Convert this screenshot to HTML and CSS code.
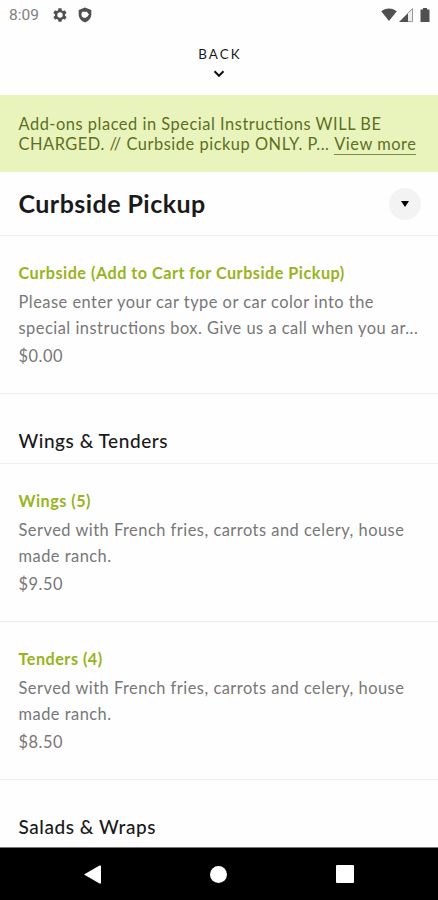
FILE: index.html
```
<!DOCTYPE html>
<html lang="en">
<head>
    <meta charset="UTF-8">
    <meta name="viewport" content="width=device-width, initial-scale=1.0">
    <title>Curbside Pickup</title>
    <link rel="stylesheet" href="styles.css">
</head>
<body>
    <div class="status-bar">
        <span class="time">8:09</span>
        <svg class="gear" width="16" height="16" viewBox="0 0 24 24">
            <path fill-rule="evenodd" d="M19.4 13a7.500 7.500 0 0 0 0-2l2.100-1.600a.5.5 0 0 0 .1-.7l-2-3.400a.5.5 0 0 0-.6-.2l-2.500 1a7.300 7.300 0 0 0-1.700-1l-.4-2.600a.5.5 0 0 0-.5-.5h-4a.5.5 0 0 0-.5.500L9 5.100a7.700 7.700 0 0 0-1.700 1l-2.500-1a.5.5 0 0 0-.6.200l-2 3.400a.5.5 0 0 0 .1.700L4.500 11a8 8 0 0 0 0 2l-2.100 1.600a.5.5 0 0 0-.1.700l2 3.400c.1.200.4.300.6.200l2.500-1c.5.400 1.100.8 1.700 1l.4 2.600c0 .3.200.5.500.5h4c.3 0 .5-.2.500-.5l.4-2.600c.6-.2 1.200-.6 1.700-1l2.500 1c.2.100.5 0 .6-.2l2-3.400a.5.5 0 0 0-.1-.7zM12 16a4 4 0 1 1 0-8 4 4 0 0 1 0 8z"/>
        </svg>
        <svg class="shield" width="14" height="16" viewBox="0 0 14 16">
            <path fill-rule="evenodd" d="M7 .5 13.300 2.900V7.600C13.300 11.200 10.700 14.300 7 15.500 3.300 14.300.7 11.200.7 7.600V2.900zM5 4.500C3.300 5.200 3 8 4 9.600 5 11.200 7.500 11.200 9 9.900L11 7.600 8.600 4.600 7.500 5z"/>
        </svg>
        <div class="signals">
            <svg width="16" height="13" viewBox="0 0 16 13">
                <path d="M8 13 .2 3.300C4.500-.6 11.500-.6 15.800 3.300z"/>
            </svg>
            <svg width="14" height="14" viewBox="0 0 14 14">
                <path d="M0 14 9 5V14z"/>
                <path class="faint" d="M9 5 13.500.5V13.500H9"/>
            </svg>
            <svg class="battery" width="10" height="14" viewBox="0 0 10 14">
                <path d="M3 0H7V1.500H9.500V14H.5V1.500H3z"/>
            </svg>
        </div>
    </div>

    <div class="back">
        <span>BACK</span>
        <svg width="12" height="8" viewBox="0 0 12 8">
            <path d="M1.500 1.300 6 5.800 10.500 1.300"/>
        </svg>
    </div>

    <div class="notice">
        Add-ons placed in Special Instructions WILL BE<br>
        CHARGED. // Curbside pickup ONLY. P... <a class="view-more">View more</a>
    </div>

    <div class="menu-title">
        <h1>Curbside Pickup</h1>
        <div class="dropdown">
            <svg width="8" height="6" viewBox="0 0 8 6">
                <path d="M0 0H8L4 6z"/>
            </svg>
        </div>
    </div>

    <div class="item">
        <h3>Curbside (Add to Cart for Curbside Pickup)</h3>
        <p>Please enter your car type or car color into the<br>special instructions box. Give us a call when you ar...</p>
        <div class="price">$0.00</div>
    </div>

    <h2>Wings &amp; Tenders</h2>

    <div class="item">
        <h3>Wings (5)</h3>
        <p>Served with French fries, carrots and celery, house<br>made ranch.</p>
        <div class="price">$9.50</div>
    </div>

    <div class="item">
        <h3>Tenders (4)</h3>
        <p>Served with French fries, carrots and celery, house<br>made ranch.</p>
        <div class="price">$8.50</div>
    </div>

    <h2>Salads &amp; Wraps</h2>

    <div class="nav-bar">
        <svg width="17" height="19" viewBox="0 0 17 19">
            <path d="M0 9.500 15.500.5Q17 0 17 1.500V17.500Q17 19 15.500 18.500z"/>
        </svg>
        <div class="home"></div>
        <div class="recent"></div>
    </div>
</body>
</html>
```
FILE: styles.css
```
* {
    box-sizing: border-box;
}

body {
    font-family: Lato, sans-serif;
    font-feature-settings: "liga" 1;
    background-color: #fefefe;
    color: #1a1a1a;
    margin: 0;
    height: 900px;
    display: flex;
    flex-direction: column;
    overflow: hidden;
    white-space: nowrap;
}

body > * {
    flex-shrink: 0;
}

h1, h2, h3, p {
    margin: 0;
}

svg {
    display: block;
}

.status-bar {
    display: flex;
    align-items: center;
    height: 29px;
    padding: 0 8px 0 9px;
    fill: #505050;
}

.time {
    width: 43px;
    font-family: Roboto, sans-serif;
    font-size: 15.500px;
    color: #808080;
}

.shield {
    margin-left: 10px;
}

.signals {
    display: flex;
    align-items: center;
    margin-left: auto;
}

.signals svg + svg {
    margin-left: 2px;
}

.signals .battery {
    margin-left: 7px;
}

.faint {
    fill: #eee;
    stroke: #999;
}

.back {
    display: flex;
    flex-direction: column;
    align-items: center;
    height: 66px;
    padding-top: 16px;
    font-size: 13.400px;
    line-height: 18px;
    letter-spacing: 2.100px;
}

.back span {
    padding-left: 2px;
}

.back svg {
    margin-top: 7px;
    fill: none;
    stroke: #111;
    stroke-width: 2;
}

.notice {
    height: 77px;
    padding: 19px 18.500px;
    background-color: #e9f4bd;
    color: #5d6f24;
    font-size: 16.400px;
    line-height: 20px;
    letter-spacing: 0.53px;
}

.view-more {
    display: inline-block;
    border-bottom: 1px solid #7d8c45;
}

.menu-title {
    display: flex;
    align-items: center;
    justify-content: space-between;
    height: 64px;
    padding: 0 17px 0 18.500px;
    border-bottom: 1px solid #eee;
}

h1 {
    padding-bottom: 2px;
    font-size: 25px;
    font-weight: bold;
    letter-spacing: 0.45px;
}

.dropdown {
    display: flex;
    align-items: center;
    justify-content: center;
    width: 32px;
    height: 32px;
    border-radius: 50%;
    background-color: #f3f3f3;
}

.item {
    height: 158px;
    padding: 27px 18.500px 0;
    border-bottom: 1px solid #eee;
    letter-spacing: 0.5px;
}

h3 {
    color: #97b41c;
    font-size: 16.200px;
    line-height: 20px;
}

.item p {
    margin-top: 6px;
    color: #777;
    font-size: 16.400px;
    line-height: 25.500px;
}

.price {
    margin-top: 3px;
    color: #777;
    font-size: 16.400px;
    line-height: 26px;
}

h2 {
    height: 70px;
    padding: 34px 18.500px 0;
    border-bottom: 1px solid #eee;
    font-size: 19px;
    font-weight: 500;
    line-height: 26px;
    letter-spacing: 0.55px;
}

.nav-bar {
    position: absolute;
    left: 0;
    right: 0;
    bottom: 0;
    display: flex;
    align-items: center;
    justify-content: space-between;
    height: 53px;
    padding: 0 84px 0 84px;
    border-top: 1px solid #777;
    background-color: #000;
    fill: #fff;
}

.home {
    width: 17px;
    height: 17px;
    border-radius: 50%;
    background-color: #fff;
}

.recent {
    width: 18px;
    height: 18px;
    border-radius: 1px;
    background-color: #fff;
}
```
